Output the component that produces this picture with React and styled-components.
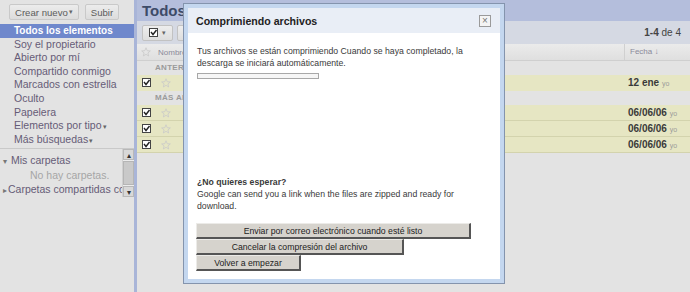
import React from 'react';
import styled, { createGlobalStyle } from 'styled-components';

const GlobalStyle = createGlobalStyle`
  body {
    margin: 0;
    font-family: "Liberation Sans", Arial, sans-serif;
    background: #e3e3e3;
  }
`;

const navItems = [
  'Soy el propietario',
  'Abierto por mí',
  'Compartido conmigo',
  'Marcados con estrella',
  'Oculto',
  'Papelera',
];

const StarIcon = () => (
  <svg width="10" height="10" viewBox="0 0 10 10">
    <path
      d="M5 0.8 L6.2 3.7 L9.3 3.9 L6.9 5.9 L7.7 9 L5 7.3 L2.3 9 L3.1 5.9 L0.7 3.9 L3.8 3.7 Z"
      fill="none"
      stroke="#c9c9c9"
      strokeWidth="0.8"
    />
  </svg>
);

const CheckIcon = () => (
  <svg width="9" height="9" viewBox="0 0 9 9">
    <rect x="0.5" y="0.5" width="8" height="8" fill="#fff" stroke="#444" />
    <path d="M2 4 L4 6.5 L7.5 2" fill="none" stroke="#222" strokeWidth="1.4" />
  </svg>
);

const App = () => {
  return (
    <>
      <GlobalStyle />
      <Page>
        <Sidebar>
          <SideButtons>
            <SideButton>Crear nuevo<Caret>▾</Caret></SideButton>
            <SideButton>Subir</SideButton>
          </SideButtons>
          <NavList>
            <NavItem selected>Todos los elementos</NavItem>
            {navItems.map((item) => (
              <NavItem key={item}>{item}</NavItem>
            ))}
            <NavItem>Elementos por tipo<Caret>▾</Caret></NavItem>
            <NavItem>Más búsquedas<Caret>▾</Caret></NavItem>
          </NavList>
          <FolderPane>
            <FolderList>
              <FolderItem><Toggle>▾</Toggle> Mis carpetas</FolderItem>
              <EmptyNote>No hay carpetas.</EmptyNote>
              <FolderItem><Toggle>▸</Toggle>Carpetas compartidas conm</FolderItem>
            </FolderList>
            <Scrollbar>
              <ScrollArrow>▴</ScrollArrow>
              <ScrollThumb />
              <ScrollArrow>▾</ScrollArrow>
            </Scrollbar>
          </FolderPane>
        </Sidebar>
        <Splitter />
        <Main>
          <MainHeader>Todos los elementos</MainHeader>
          <Toolbar>
            <ToolButton><CheckIcon /><Caret>▾</Caret></ToolButton>
            <ToolButton>C</ToolButton>
            <Counter><b>1-4</b> de 4</Counter>
          </Toolbar>
          <ColumnHeader>
            <StarCell><StarIcon /></StarCell>
            <NameCell>Nombre</NameCell>
            <DateHead>Fecha ↓</DateHead>
          </ColumnHeader>
          <GroupRow>ANTERIORES</GroupRow>
          <DocRow>
            <CheckCell><CheckIcon /></CheckCell>
            <StarCell><StarIcon /></StarCell>
            <NameCell />
            <DateCell>12 ene <Who>yo</Who></DateCell>
          </DocRow>
          <GroupRow>MÁS ANTIGUOS</GroupRow>
          {[0, 1, 2].map((i) => (
            <DocRow key={i} lined>
              <CheckCell><CheckIcon /></CheckCell>
              <StarCell><StarIcon /></StarCell>
              <NameCell />
              <DateCell>06/06/06 <Who>yo</Who></DateCell>
            </DocRow>
          ))}
        </Main>

        <Modal>
          <ModalInner>
            <ModalTitle>
              Comprimiendo archivos
              <CloseBox>×</CloseBox>
            </ModalTitle>
            <ModalBody>
              <Line>Tus archivos se están comprimiendo Cuando se haya completado, la</Line>
              <Line>descarga se iniciará automáticamente.</Line>
              <Progress />
              <WaitBlock>
                <Line><b>¿No quieres esperar?</b></Line>
                <Line>Google can send you a link when the files are zipped and ready for</Line>
                <Line>download.</Line>
              </WaitBlock>
              <Buttons>
                <ModalButton width={275}>Enviar por correo electrónico cuando esté listo</ModalButton>
                <ModalButton width={208}>Cancelar la compresión del archivo</ModalButton>
                <ModalButton width={105}>Volver a empezar</ModalButton>
              </Buttons>
            </ModalBody>
          </ModalInner>
        </Modal>
      </Page>
    </>
  );
};

const Page = styled.div`
  position: relative;
  display: flex;
  width: 690px;
  height: 292px;
  overflow: hidden;
  background: #e3e3e3;
  font-size: 10.5px;
`;

const Sidebar = styled.div`
  width: 134px;
  flex-shrink: 0;
  display: flex;
  flex-direction: column;
  background: #e3e3e3;
`;

const SideButtons = styled.div`
  display: flex;
  gap: 6px;
  padding: 4px 0 0 9px;
  height: 20px;
  box-sizing: border-box;
`;

const SideButton = styled.div`
  height: 16px;
  padding: 0 5px;
  display: flex;
  align-items: center;
  background: linear-gradient(#ececec, #dcdcdc);
  border: 1px solid #c9c9c9;
  border-radius: 2px;
  color: #5b5b5b;
  font-size: 9.6px;
  box-sizing: border-box;
`;

const Caret = styled.span`
  font-size: 7px;
  margin-left: 1px;
  color: #666;
`;

const NavList = styled.div`
  margin-top: 4px;
  display: flex;
  flex-direction: column;
  padding-bottom: 2px;
  border-bottom: 1px solid #c9c9c9;
`;

const NavItem = styled.div`
  height: 13.6px;
  line-height: 13.6px;
  padding-left: 14px;
  white-space: nowrap;
  color: ${(p) => (p.selected ? '#fff' : '#665c77')};
  background: ${(p) => (p.selected ? '#6f88cc' : 'transparent')};
  font-weight: ${(p) => (p.selected ? 'bold' : 'normal')};
  font-size: ${(p) => (p.selected ? '10px' : '10.5px')};
`;

const FolderPane = styled.div`
  display: flex;
  height: 48px;
`;

const FolderList = styled.div`
  flex: 1;
  overflow: hidden;
  padding-top: 4px;
`;

const FolderItem = styled.div`
  height: 14.5px;
  line-height: 14.5px;
  white-space: nowrap;
  overflow: hidden;
  color: #665c77;
  padding-left: 3px;
`;

const Toggle = styled.span`
  font-size: 8px;
  color: #777;
  margin-right: 1px;
`;

const EmptyNote = styled.div`
  height: 14.5px;
  line-height: 14.5px;
  padding-left: 30px;
  color: #a6a6a6;
`;

const Scrollbar = styled.div`
  width: 11px;
  display: flex;
  flex-direction: column;
  background: #ececec;
  border-left: 1px solid #d0d0d0;
`;

const ScrollArrow = styled.div`
  height: 11px;
  font-size: 8px;
  line-height: 11px;
  text-align: center;
  color: #333;
  background: #d8d8d8;
  border: 1px solid #b8b8b8;
  box-sizing: border-box;
`;

const ScrollThumb = styled.div`
  flex: 1;
  margin: 1px 0;
  background: #c9c9c9;
  border: 1px solid #b5b5b5;
`;

const Splitter = styled.div`
  width: 3px;
  flex-shrink: 0;
  background: #a9b5d8;
`;

const Main = styled.div`
  flex: 1;
  display: flex;
  flex-direction: column;
`;

const MainHeader = styled.div`
  height: 21px;
  line-height: 21px;
  padding-left: 5px;
  background: #b4bedc;
  color: #3d4b68;
  font-size: 15px;
  font-weight: bold;
`;

const Toolbar = styled.div`
  height: 23px;
  display: flex;
  align-items: center;
  gap: 4px;
  padding: 0 9px 0 5px;
  background: #d5d9e3;
`;

const ToolButton = styled.div`
  height: 16px;
  padding: 0 6px;
  display: flex;
  align-items: center;
  gap: 3px;
  background: linear-gradient(#ededed, #dedede);
  border: 1px solid #c2c2c2;
  border-radius: 2px;
  color: #444;
  box-sizing: border-box;
`;

const Counter = styled.div`
  margin-left: auto;
  color: #444;
  font-size: 10px;
`;

const ColumnHeader = styled.div`
  height: 16px;
  display: flex;
  align-items: center;
  background: linear-gradient(#ebebeb, #dfdfdf);
  border-bottom: 1px solid #cfcfcf;
  color: #8a8a9a;
  font-size: 8px;
`;

const StarCell = styled.div`
  width: 18px;
  display: flex;
  justify-content: center;
`;

const CheckCell = styled.div`
  width: 15px;
  padding-left: 5px;
  display: flex;
`;

const NameCell = styled.div`
  flex: 1;
  padding-left: 3px;
`;

const DateHead = styled.div`
  width: 60px;
  height: 100%;
  line-height: 16px;
  padding-left: 5px;
  border-left: 1px solid #d0d0d0;
  font-size: 8px;
`;

const GroupRow = styled.div`
  height: 14px;
  line-height: 14px;
  padding-left: 18px;
  background: #e3e3e3;
  color: #9a9a9a;
  font-weight: bold;
  font-size: 8px;
  letter-spacing: 0.3px;
`;

const DocRow = styled.div`
  height: 16px;
  display: flex;
  align-items: center;
  background: #e6e6c3;
  border-bottom: 1px solid ${(p) => (p.lined ? '#d3d3ad' : '#e6e6c3')};
  box-sizing: border-box;
`;

const DateCell = styled.div`
  width: 62px;
  font-weight: bold;
  color: #3a3a3a;
  font-size: 10px;
`;

const Who = styled.span`
  font-weight: normal;
  font-size: 7px;
  color: #9a9a9a;
`;

const Modal = styled.div`
  position: absolute;
  left: 183px;
  top: 3px;
  width: 322px;
  height: 281px;
  box-sizing: border-box;
  padding: 4px;
  background: #c4d7ef;
  border: 1px solid #8494ad;
`;

const ModalInner = styled.div`
  height: 100%;
  display: flex;
  flex-direction: column;
  background: #fff;
`;

const ModalTitle = styled.div`
  height: 25px;
  display: flex;
  align-items: center;
  justify-content: space-between;
  padding: 0 9px 0 8px;
  background: #e9eef6;
  color: #222;
  font-size: 10.6px;
  font-weight: bold;
`;

const CloseBox = styled.div`
  width: 10px;
  height: 10px;
  border: 1px solid #9a9a9a;
  background: #f4f4f4;
  color: #777;
  font-size: 10px;
  font-weight: normal;
  line-height: 9px;
  text-align: center;
`;

const ModalBody = styled.div`
  padding: 12px 8px 0 9px;
  color: #3a3a3a;
  font-size: 8.7px;
  line-height: 12px;
`;

const Line = styled.div`
  white-space: nowrap;
`;

const Progress = styled.div`
  width: 120px;
  height: 4px;
  margin-top: 4px;
  border: 1px solid #a8a8a8;
  background: #f6f6f6;
`;

const WaitBlock = styled.div`
  margin-top: 97px;
`;

const Buttons = styled.div`
  margin-top: 11px;
  margin-left: -1px;
  display: flex;
  flex-direction: column;
`;

const ModalButton = styled.div`
  width: ${(p) => p.width}px;
  height: 16px;
  box-sizing: border-box;
  display: flex;
  align-items: center;
  justify-content: center;
  background: #d6d3cd;
  border-top: 1px solid #ecebe8;
  border-left: 1px solid #ecebe8;
  border-right: 2px solid #555;
  border-bottom: 2px solid #555;
  color: #222;
  font-size: 8.7px;
`;

export default App;
